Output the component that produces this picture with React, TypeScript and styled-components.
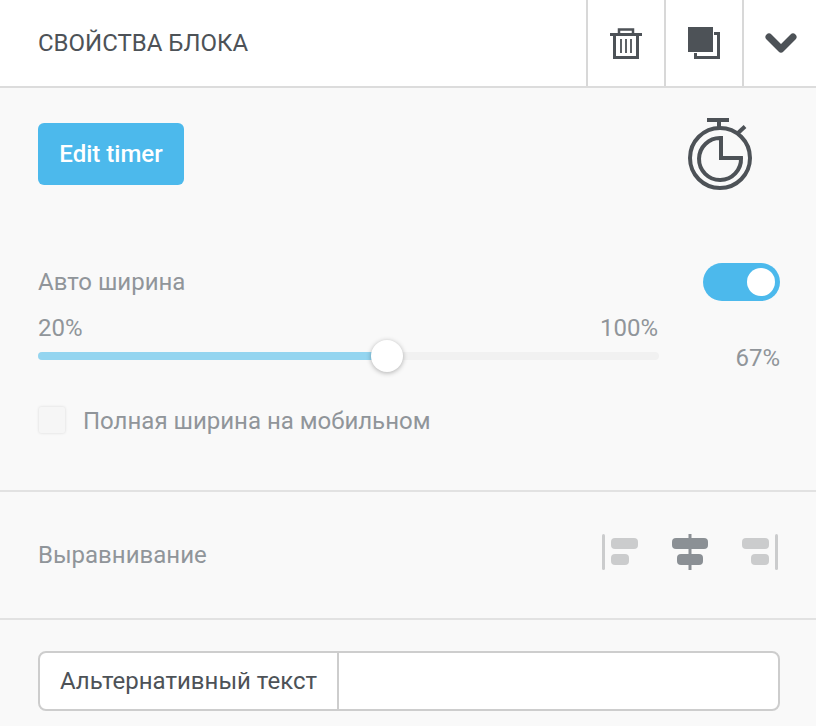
import React from 'react';
import styled, { createGlobalStyle } from 'styled-components';

const GlobalStyle = createGlobalStyle`
  html, body {
    margin: 0;
    padding: 0;
    background: #f9f9f9;
    font-family: Roboto, "Liberation Sans", sans-serif;
  }
`;

const Panel = styled.div`
  width: 816px;
  height: 726px;
  overflow: hidden;
  background: #f9f9f9;
`;

const Header = styled.div`
  display: flex;
  align-items: stretch;
  height: 86px;
  background: #fff;
  border-bottom: 2px solid #dcdcdc;
`;

const Title = styled.div`
  flex: 1;
  padding-left: 38px;
  line-height: 86px;
  font-size: 24px;
  font-weight: 400;
  color: #4d5257;
`;

const HeaderButton = styled.div<{ $wide?: boolean }>`
  box-sizing: border-box;
  width: ${(p) => (p.$wide ? '74px' : '78px')};
  padding-left: ${(p) => (p.$wide ? '2px' : '0')};
  border-left: 2px solid #d8d8d8;
  display: flex;
  align-items: center;
  justify-content: center;
`;

const Section = styled.div<{ $height: number; $pad: number }>`
  box-sizing: border-box;
  height: ${(p) => p.$height}px;
  padding: ${(p) => p.$pad}px 36px 0 38px;
  border-bottom: 2px solid #e2e2e2;
`;

const LastSection = styled.div`
  padding: 31px 36px 0 38px;
`;

const TopRow = styled.div`
  display: flex;
  justify-content: space-between;
  align-items: flex-start;
  height: 130px;
`;

const BlueButton = styled.div`
  width: 146px;
  height: 62px;
  line-height: 63px;
  text-align: center;
  border-radius: 6px;
  background: #4cb9ec;
  color: #fff;
  font-size: 24px;
  font-weight: 500;
`;

const TimerIcon = styled.svg`
  margin: -7px 28px 0 0;
`;

const LabelRow = styled.div`
  display: flex;
  justify-content: space-between;
  align-items: center;
  height: 38px;
  margin-top: 10px;
`;

const Label = styled.div`
  font-size: 24px;
  color: #90959a;
`;

const Toggle = styled.div`
  box-sizing: border-box;
  display: flex;
  justify-content: flex-end;
  align-items: center;
  width: 77px;
  height: 38px;
  padding-right: 5px;
  border-radius: 19px;
  background: #4cb9ec;
`;

const ToggleKnob = styled.div`
  width: 28px;
  height: 28px;
  border-radius: 50%;
  background: #fff;
`;

const SliderRow = styled.div`
  display: flex;
  justify-content: space-between;
  align-items: flex-end;
`;

const SliderColumn = styled.div`
  width: 621px;
`;

const SliderScale = styled.div`
  display: flex;
  justify-content: space-between;
  padding-right: 1px;
  font-size: 24px;
  line-height: 26px;
  color: #90959a;
  margin-top: 14px;
`;

const Track = styled.div`
  position: relative;
  height: 8px;
  margin-top: 11px;
  border-radius: 4px;
  background: #f1f1f1;
`;

const TrackFill = styled.div`
  height: 8px;
  border-radius: 4px;
  background: #94d5f0;
`;

const Thumb = styled.div`
  position: absolute;
  top: -12px;
  width: 32px;
  height: 32px;
  margin-left: -16px;
  border-radius: 50%;
  background: #fff;
  box-shadow: 0 1px 5px rgba(0, 0, 0, 0.3);
`;

const Percent = styled.div`
  font-size: 24px;
  line-height: 26px;
  color: #90959a;
  margin-bottom: -11px;
`;

const CheckRow = styled.div`
  display: flex;
  align-items: center;
  gap: 18px;
  margin-top: 41px;
  height: 40px;
`;

const Checkbox = styled.div`
  width: 26px;
  height: 26px;
  margin: -2px 0 0 1px;
  border-radius: 2px;
  background: #f6f6f6;
  box-shadow: 0 0 3px rgba(0, 0, 0, 0.14);
`;

const AlignRow = styled.div`
  display: flex;
  justify-content: space-between;
  align-items: center;
`;

const AlignIcons = styled.div`
  display: flex;
  align-items: center;
  gap: 34px;
  margin: 0 2px 6px 0;
`;

const InputGroup = styled.div`
  box-sizing: border-box;
  display: flex;
  width: 742px;
  height: 60px;
  border: 2px solid #cdcdcd;
  border-radius: 8px;
  background: #fff;
`;

const InputLabel = styled.div`
  box-sizing: border-box;
  width: 299px;
  padding-left: 20px;
  line-height: 56px;
  font-size: 24px;
  color: #4d5257;
  border-right: 2px solid #cdcdcd;
`;

const InputField = styled.div`
  flex: 1;
`;

const AlignSvg = styled.svg`
  display: block;
`;

export default function App() {
  const dark = '#4d5257';
  const sliderPos = `${(349 / 621) * 100}%`;
  return (
    <Panel>
      <GlobalStyle />
      <Header>
        <Title>СВОЙСТВА БЛОКА</Title>
        <HeaderButton>
          <svg width="32" height="32" viewBox="0 0 32 32" fill="none" stroke={dark}>
            <path d="M0 7.500h32" strokeWidth="3" />
            <path d="M9 7V2.500h14V7" strokeWidth="2.500" />
            <path d="M4.500 8v22.500h23V8" strokeWidth="3" />
            <path d="M11 12v14M16 12v14M21 12v14" strokeWidth="1.800" />
          </svg>
        </HeaderButton>
        <HeaderButton>
          <svg width="32" height="32" viewBox="0 0 32 32" fill="none">
            <rect x="0" y="0" width="25" height="25" fill={dark} />
            <path d="M26 6.500h4.500v24H7.500V26" stroke={dark} strokeWidth="3" />
          </svg>
        </HeaderButton>
        <HeaderButton $wide>
          <svg width="32" height="20" viewBox="0 0 32 20" fill="none">
            <path d="M4 4L16 16L28 4" stroke={dark} strokeWidth="7" strokeLinecap="round" strokeLinejoin="round" />
          </svg>
        </HeaderButton>
      </Header>

      <Section $height={404} $pad={35}>
        <TopRow>
          <BlueButton>Edit timer</BlueButton>
          <TimerIcon width="64" height="76" viewBox="0 0 64 76" fill="none" stroke={dark}>
            <circle cx="32" cy="42" r="30" strokeWidth="4" />
            <path d="M19 4h22M31 4v8" strokeWidth="4" />
            <path d="M50 17l7-6.500" strokeWidth="4" />
            <path d="M33 22v20h20a21 21 0 1 1 -20 -20z" strokeWidth="4" />
          </TimerIcon>
        </TopRow>
        <LabelRow>
          <Label>Авто ширина</Label>
          <Toggle>
            <ToggleKnob />
          </Toggle>
        </LabelRow>
        <SliderRow>
          <SliderColumn>
            <SliderScale>
              <span>20%</span>
              <span>100%</span>
            </SliderScale>
            <Track>
              <TrackFill style={{ width: sliderPos }} />
              <Thumb style={{ left: sliderPos }} />
            </Track>
          </SliderColumn>
          <Percent>67%</Percent>
        </SliderRow>
        <CheckRow>
          <Checkbox />
          <Label>Полная ширина на мобильном</Label>
        </CheckRow>
      </Section>

      <Section $height={128} $pad={42}>
        <AlignRow>
          <Label>Выравнивание</Label>
          <AlignIcons>
            <AlignSvg width="36" height="36" viewBox="0 0 36 36">
              <rect x="0" y="0" width="3" height="36" rx="1.500" fill="#cbcccd" />
              <rect x="9" y="4" width="27" height="11" rx="4" fill="#cbcccd" />
              <rect x="9" y="20" width="18" height="11" rx="4" fill="#cbcccd" />
            </AlignSvg>
            <AlignSvg width="36" height="36" viewBox="0 0 36 36">
              <rect x="16.500" y="0" width="3" height="36" fill="#8b9095" />
              <rect x="0" y="4" width="36" height="11" rx="4" fill="#8b9095" />
              <rect x="5" y="20" width="26" height="11" rx="4" fill="#8b9095" />
            </AlignSvg>
            <AlignSvg width="36" height="36" viewBox="0 0 36 36">
              <rect x="33" y="0" width="3" height="36" rx="1.500" fill="#cbcccd" />
              <rect x="0" y="4" width="27" height="11" rx="4" fill="#cbcccd" />
              <rect x="9" y="20" width="18" height="11" rx="4" fill="#cbcccd" />
            </AlignSvg>
          </AlignIcons>
        </AlignRow>
      </Section>

      <LastSection>
        <InputGroup>
          <InputLabel>Альтернативный текст</InputLabel>
          <InputField />
        </InputGroup>
      </LastSection>
    </Panel>
  );
}
